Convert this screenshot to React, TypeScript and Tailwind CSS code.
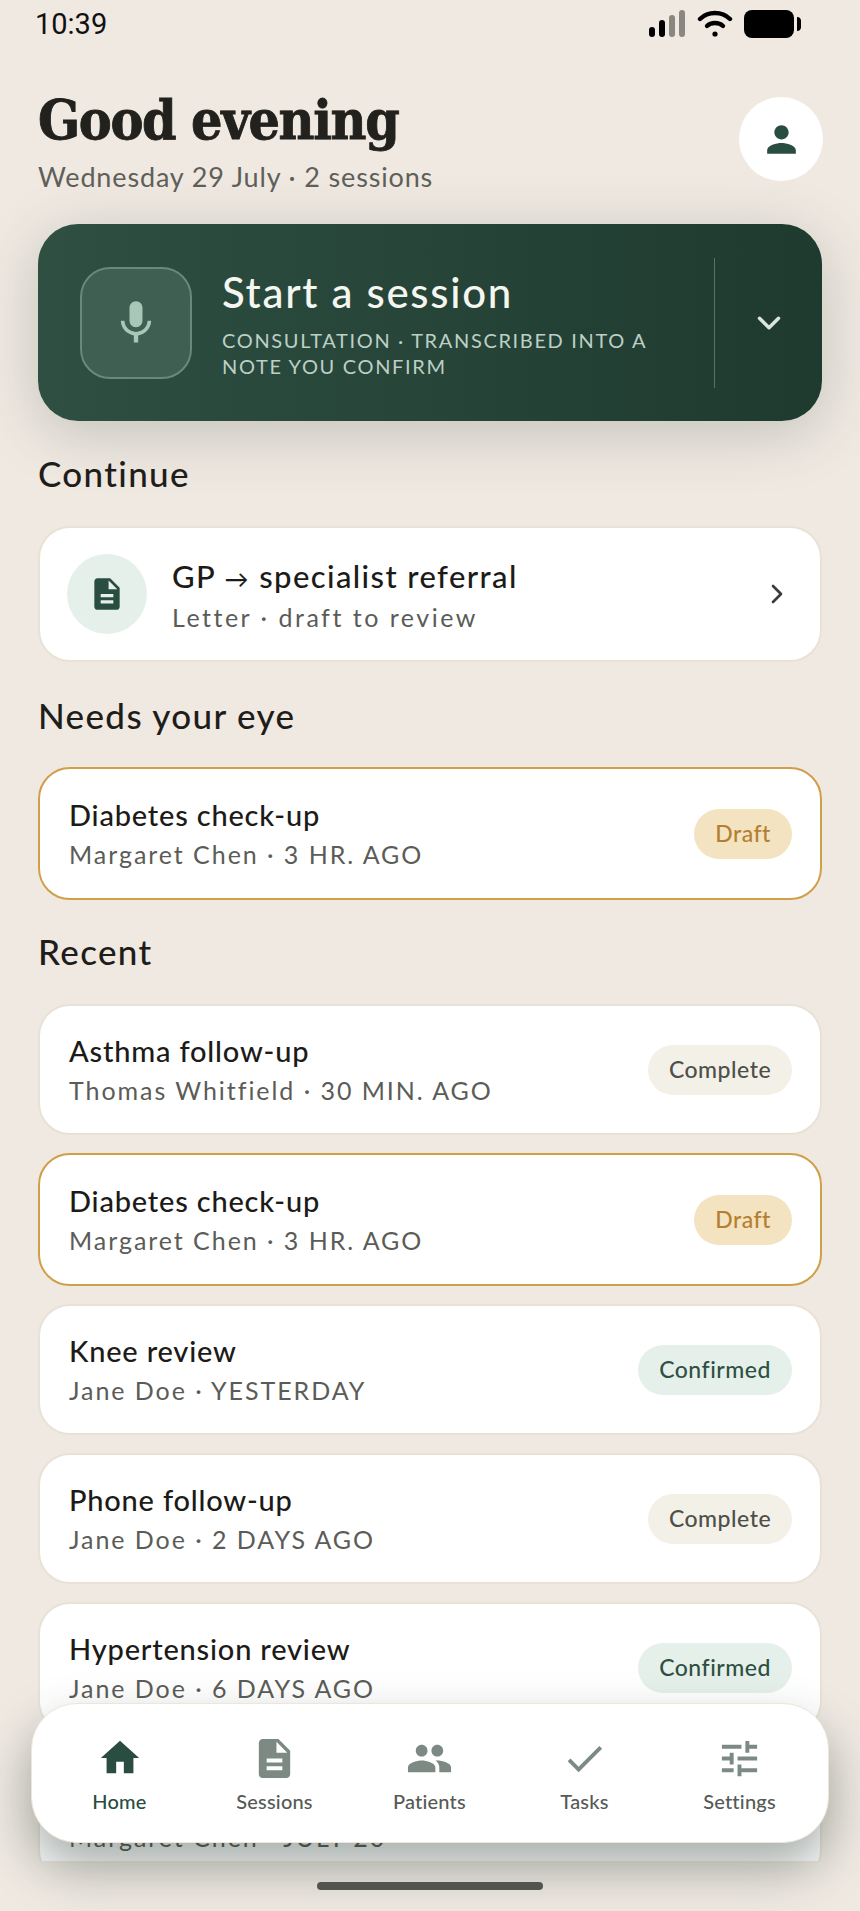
import { MdHome, MdDescription, MdPeople, MdCheck, MdTune, MdPerson, MdMic } from "react-icons/md";
import { ChevronDown, ChevronRight } from "lucide-react";

const font = { fontFamily: '"Lato", "Noto Sans", sans-serif' };

function Badge({ kind }: { kind: "Draft" | "Complete" | "Confirmed" }) {
  const cls =
    kind === "Draft"
      ? "bg-[#f3e3c1] text-[#b57f2f] w-[98px]"
      : kind === "Complete"
      ? "bg-[#f3f0e8] text-[#4d4f49] w-[144px]"
      : "bg-[#e6f0ea] text-[#2f4f43] w-[154px]";
  return (
    <span className={"flex h-[50px] items-center justify-center rounded-full text-[23px] font-medium tracking-[0.5px] " + cls}>{kind}</span>
  );
}

function Row({ title, sub, badge, gold }: { title: string; sub: string; badge?: "Draft" | "Complete" | "Confirmed"; gold?: boolean }) {
  return (
    <div
      className={
        "flex items-center justify-between rounded-[32px] border-2 bg-white pl-[29px] pr-[28px] " +
        (gold ? "h-[133px] border-[#cf9f49]" : "h-[131px] border-[#e8e2d6]")
      }
    >
      <div className="flex flex-col">
        <span className="text-[29px] font-medium leading-[39px] tracking-[0.8px] text-[#1c1b18]">{title}</span>
        <span className="mt-[1px] text-[25px] leading-[38px] tracking-[1.95px] text-[#5b5c57]">{sub}</span>
      </div>
      {badge && <Badge kind={badge} />}
    </div>
  );
}

function Section({ children }: { children: string }) {
  return <h2 className="text-[35px] font-medium leading-[42px] tracking-[1.35px] text-[#1f1d1a]">{children}</h2>;
}

function Tab({ icon, label, active }: { icon: React.ReactNode; label: string; active?: boolean }) {
  return (
    <div className="flex w-[155px] flex-col items-center">
      <div className={"flex h-[60px] items-center justify-center " + (active ? "text-[#2a4d41]" : "text-[#7d8a84]")}>{icon}</div>
      <span className={"text-[20px] font-medium leading-[26px] tracking-[0.2px] " + (active ? "text-[#2a4d41]" : "text-[#555a55]")}>{label}</span>
    </div>
  );
}

export default function App() {
  return (
    <div className="relative h-[1911px] w-[860px] overflow-hidden bg-[#efe9e2]" style={font}>
      <div className="flex h-[48px] items-center justify-between pl-[35px] pr-[58px]">
        <span className="text-[29px] leading-none text-[#111]" style={{ fontFamily: "Roboto, sans-serif" }}>10:39</span>
        <div className="flex items-center gap-[11px]">
          <svg width="37" height="28" viewBox="0 0 37 28">
            <rect x="0" y="17" width="6" height="10" rx="3" fill="#000" />
            <rect x="10" y="10" width="6" height="17" rx="3" fill="#000" />
            <rect x="20" y="5" width="6" height="22" rx="3" fill="#8a8780" />
            <rect x="30" y="0" width="6" height="27" rx="3" fill="#8a8780" />
          </svg>
          <svg width="36" height="28" viewBox="0 0 36 28" fill="none" stroke="#000" strokeWidth="4.4" strokeLinecap="round">
            <path d="M3 9 C11 1 25 1 33 9" />
            <path d="M10 16 C14 12 22 12 26 16" />
            <circle cx="18" cy="24" r="2.6" fill="#000" stroke="none" />
          </svg>
          <svg width="58" height="28" viewBox="0 0 58 28">
            <rect x="0" y="0" width="50" height="28" rx="8" fill="#000" />
            <path d="M53 7 C56 7 57 9 57 11 V17 C57 19 56 21 53 21 Z" fill="#000" />
          </svg>
        </div>
      </div>

      <div className="flex h-[176px] justify-between pl-[38px] pr-[37px] pt-[41px]">
        <div className="flex flex-col">
          <h1 className="text-[55px] font-bold leading-[62px] tracking-[-1.4px] text-[#23211d] [-webkit-text-stroke:0.8px_#23211d]" style={{ fontFamily: '"DejaVu Serif Condensed", "DejaVu Serif", serif' }}>Good evening</h1>
          <span className="mt-[9px] text-[27px] leading-[34px] tracking-[0.85px] text-[#5e5f59]">Wednesday 29 July · 2 sessions</span>
        </div>
        <div className="mt-[8px] flex h-[84px] w-[84px] items-center justify-center rounded-full bg-white text-[#2a4d41]">
          <MdPerson size={43} />
        </div>
      </div>

      <div className="mx-[38px] flex h-[197px] items-center rounded-[40px] bg-gradient-to-r from-[#2e4f42] to-[#1f3a2f] pl-[42px] shadow-[0_12px_60px_rgba(40,60,45,0.22)]">
        <div className="flex h-[112px] w-[112px] shrink-0 items-center justify-center rounded-[30px] border-2 border-[#6a887b] bg-[#3f5f53] text-[#a9c7b9]">
          <MdMic size={52} />
        </div>
        <div className="ml-[30px] flex w-[492px] shrink-0 flex-col">
          <span className="text-[42px] font-medium leading-[52px] tracking-[1.7px] text-[#f6f6f1]">Start a session</span>
          <span className="mt-[9px] w-[440px] text-[20px] leading-[26px] tracking-[1.65px] text-[#bdcfc6]">CONSULTATION · TRANSCRIBED INTO A NOTE YOU CONFIRM</span>
        </div>
        <div className="h-[130px] w-[1px] shrink-0 bg-[#55736a]" />
        <div className="flex flex-1 items-center justify-center text-[#dbe6df]">
          <ChevronDown size={38} strokeWidth={2.2} />
        </div>
      </div>

      <div className="mt-[31px] px-[38px]">
        <Section>Continue</Section>
      </div>
      <div className="mt-[32px] px-[38px]">
        <div className="flex h-[136px] items-center rounded-[32px] border-2 border-[#e8e2d6] bg-white pl-[27px] pr-[27px]">
          <div className="flex h-[80px] w-[80px] shrink-0 items-center justify-center rounded-full bg-[#e6f0ea] text-[#2a4d41]">
            <MdDescription size={38} />
          </div>
          <div className="ml-[25px] flex flex-1 flex-col pt-[3px]">
            <span className="text-[31px] font-medium leading-[40px] tracking-[1.4px] text-[#1c1b18]">
              GP <span className="text-[24px]">→</span> specialist referral
            </span>
            <span className="text-[25px] leading-[36px] tracking-[2.5px] text-[#5b5c57]">Letter · draft to review</span>
          </div>
          <ChevronRight size={32} strokeWidth={2} className="text-[#3b3d39]" />
        </div>
      </div>

      <div className="mt-[32px] px-[38px]">
        <Section>Needs your eye</Section>
      </div>
      <div className="mt-[31px] px-[38px]">
        <Row title="Diabetes check-up" sub="Margaret Chen · 3 HR. AGO" badge="Draft" gold />
      </div>

      <div className="mt-[30px] px-[38px]">
        <Section>Recent</Section>
      </div>
      <div className="mt-[32px] h-[857px] overflow-hidden px-[38px]">
        <div className="flex flex-col gap-[18px]">
          <Row title="Asthma follow-up" sub="Thomas Whitfield · 30 MIN. AGO" badge="Complete" />
          <Row title="Diabetes check-up" sub="Margaret Chen · 3 HR. AGO" badge="Draft" gold />
          <Row title="Knee review" sub="Jane Doe · YESTERDAY" badge="Confirmed" />
          <Row title="Phone follow-up" sub="Jane Doe · 2 DAYS AGO" badge="Complete" />
          <Row title="Hypertension review" sub="Jane Doe · 6 DAYS AGO" badge="Confirmed" />
          <Row title="Diabetes review" sub="Margaret Chen · JULY 20" />
        </div>
      </div>

      <div className="absolute left-[31px] top-[1703px] flex h-[140px] w-[798px] items-start rounded-[46px] border border-[#eee6d8] bg-white pl-[10px] pt-[24px] shadow-[0_24px_50px_rgba(30,50,40,0.4)]">
        <Tab active label="Home" icon={<MdHome size={46} />} />
        <Tab label="Sessions" icon={<MdDescription size={47} />} />
        <Tab label="Patients" icon={<MdPeople size={47} />} />
        <Tab label="Tasks" icon={<MdCheck size={47} />} />
        <Tab label="Settings" icon={<MdTune size={47} />} />
      </div>

      <div className="absolute left-[317px] top-[1882px] h-[8px] w-[226px] rounded-full bg-[#53544d]" />
    </div>
  );
}
